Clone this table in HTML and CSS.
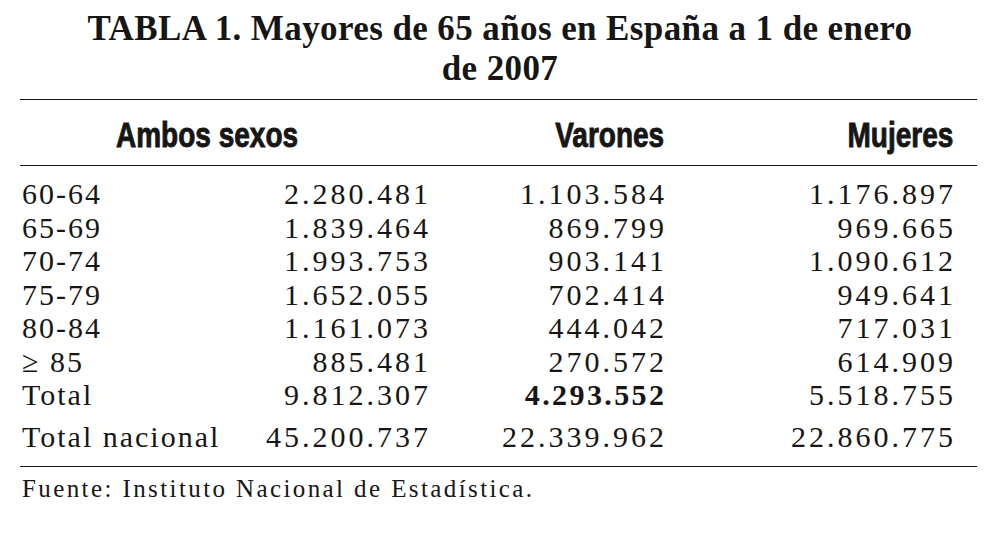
FILE: index.html
```html
<!DOCTYPE html>
<html lang="es">
<head>
<meta charset="utf-8">
<title>TABLA 1. Mayores de 65 años en España</title>
<link rel="stylesheet" href="styles.css">
</head>
<body>
<div class="page">
  <h1 class="title">TABLA 1. Mayores de 65 años en España a 1 de enero<br>de 2007</h1>
  <div class="table">
    <div class="head row">
      <div class="hcell first"><span class="hlabel left">Ambos sexos</span></div>
      <div class="hcell c2"><span class="hlabel right">Varones</span></div>
      <div class="hcell c3"><span class="hlabel right">Mujeres</span></div>
    </div>
    <div class="body">
      <div class="row"><div class="label">60-64</div><div class="num">2.280.481</div><div class="num">1.103.584</div><div class="num">1.176.897</div></div>
      <div class="row"><div class="label">65-69</div><div class="num">1.839.464</div><div class="num">869.799</div><div class="num">969.665</div></div>
      <div class="row"><div class="label">70-74</div><div class="num">1.993.753</div><div class="num">903.141</div><div class="num">1.090.612</div></div>
      <div class="row"><div class="label">75-79</div><div class="num">1.652.055</div><div class="num">702.414</div><div class="num">949.641</div></div>
      <div class="row"><div class="label">80-84</div><div class="num">1.161.073</div><div class="num">444.042</div><div class="num">717.031</div></div>
      <div class="row"><div class="label">≥ 85</div><div class="num">885.481</div><div class="num">270.572</div><div class="num">614.909</div></div>
      <div class="row"><div class="label">Total</div><div class="num">9.812.307</div><div class="num strong">4.293.552</div><div class="num">5.518.755</div></div>
      <div class="row national"><div class="label">Total nacional</div><div class="num">45.200.737</div><div class="num">22.339.962</div><div class="num">22.860.775</div></div>
    </div>
  </div>
  <p class="source">Fuente: Instituto Nacional de Estadística.</p>
</div>
</body>
</html>
```
FILE: styles.css
```css
html, body {
  margin: 0;
  padding: 0;
  background: #ffffff;
}

body {
  color: #161616;
  font-family: "Liberation Serif", "Times New Roman", serif;
}

.page {
  width: 1000px;
  height: 537px;
  overflow: hidden;
}

.title {
  margin: 0;
  padding-top: 9px;
  font-family: "Liberation Serif", "Times New Roman", serif;
  font-weight: bold;
  font-size: 35px;
  line-height: 40px;
  letter-spacing: 0.4px;
  text-align: center;
}

.table {
  margin: 10px 23px 0 20px;
  border-top: 1px solid #161616;
  border-bottom: 1px solid #161616;
}

.row {
  display: grid;
  grid-template-columns: 200px 206px 236px 289px;
  padding-left: 2px;
}

.head {
  padding-top: 4px;
  height: 61px;
  line-height: 61px;
  border-bottom: 1px solid #161616;
  font-family: "Liberation Sans", Arial, sans-serif;
  font-weight: bold;
  font-size: 35px;
}

.hcell.first {
  grid-column: 1 / span 2;
  padding-left: 94px;
}

.hcell.c2,
.hcell.c3 {
  text-align: right;
}

.hlabel {
  display: inline-block;
  transform: scaleX(0.8);
  white-space: nowrap;
  -webkit-text-stroke: 0.9px currentColor;
}

.hlabel.left {
  transform-origin: left center;
}

.hlabel.right {
  transform-origin: right center;
}

.body {
  padding: 11px 0 12px;
  font-size: 30px;
  line-height: 33.5px;
}

.label {
  letter-spacing: 2px;
  white-space: nowrap;
}

.num {
  text-align: right;
  letter-spacing: 3px;
  margin-right: -3px;
  white-space: nowrap;
}

.num.strong {
  font-weight: bold;
  letter-spacing: 2.4px;
  margin-right: -2.4px;
}

.national {
  margin-top: 8.5px;
}

.source {
  margin: 0;
  padding: 9px 0 0 22px;
  font-size: 25px;
  line-height: 26px;
  letter-spacing: 2.4px;
}
```
